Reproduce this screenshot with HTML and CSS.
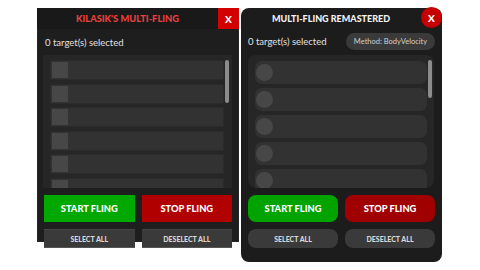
FILE: index.html
```
<!DOCTYPE html>
<html lang="en">
<head>
    <meta charset="UTF-8">
    <title>Multi-Fling</title>
    <link rel="stylesheet" href="styles.css">
</head>
<body>
<div class="desk">
    <!-- classic window -->
    <div class="panel classic">
        <div class="head">
            <div class="title">KILASIK'S MULTI-FLING</div>
            <div class="close">X</div>
        </div>
        <div class="info">
            <span>0 target(s) selected</span>
        </div>
        <div class="list">
            <div class="row"><div class="thumb"></div></div>
            <div class="row"><div class="thumb"></div></div>
            <div class="row"><div class="thumb"></div></div>
            <div class="row"><div class="thumb"></div></div>
            <div class="row"><div class="thumb"></div></div>
            <div class="row"><div class="thumb"></div></div>
            <div class="scrollbar"></div>
        </div>
        <div class="actions">
            <button class="btn start">START FLING</button>
            <button class="btn stop">STOP FLING</button>
        </div>
        <div class="actions small">
            <button class="btn sel">SELECT ALL</button>
            <button class="btn sel">DESELECT ALL</button>
        </div>
    </div>

    <!-- remastered window -->
    <div class="panel remastered">
        <div class="head">
            <div class="title">MULTI-FLING REMASTERED</div>
            <div class="close">X</div>
        </div>
        <div class="info">
            <span>0 target(s) selected</span>
            <span class="method">Method: BodyVelocity</span>
        </div>
        <div class="list">
            <div class="row"><div class="thumb"></div></div>
            <div class="row"><div class="thumb"></div></div>
            <div class="row"><div class="thumb"></div></div>
            <div class="row"><div class="thumb"></div></div>
            <div class="row"><div class="thumb"></div></div>
            <div class="scrollbar"></div>
        </div>
        <div class="actions">
            <button class="btn start">START FLING</button>
            <button class="btn stop">STOP FLING</button>
        </div>
        <div class="actions small">
            <button class="btn sel">SELECT ALL</button>
            <button class="btn sel">DESELECT ALL</button>
        </div>
    </div>
</div>
</body>
</html>
```

FILE: styles.css
```
* {
    margin: 0;
    padding: 0;
    box-sizing: border-box;
    font-family: Lato, 'Open Sans', sans-serif;
}

body {
    background: #fff;
    width: 480px;
    height: 270px;
    overflow: hidden;
}

.desk {
    display: flex;
    align-items: flex-start;
    gap: 2px;
    padding: 8px 0 0 37px;
}

.panel {
    background: #1e1e1e;
    color: #e6e6e6;
}

.head {
    display: flex;
    height: 21px;
}

.title {
    flex: 1;
    display: flex;
    align-items: center;
    justify-content: center;
    font-size: 9.3px;
    font-weight: 900;
}

.close {
    width: 21px;
    display: flex;
    align-items: center;
    justify-content: center;
    color: #fff;
    font-size: 10px;
    font-weight: 900;
}

.info {
    height: 26px;
    display: flex;
    align-items: center;
    justify-content: space-between;
    padding: 0 7px;
    font-size: 9.5px;
    color: #e0e0e0;
}

.list {
    position: relative;
    height: 133px;
    background: #262626;
    overflow: hidden;
    display: flex;
    flex-direction: column;
}

.row {
    flex-shrink: 0;
    display: flex;
    align-items: center;
    background: #323232;
    border: 1px solid #2b2b2b;
}

.scrollbar {
    position: absolute;
    width: 4px;
    background: #8c8c8c;
    border-radius: 2px;
}

.actions {
    display: flex;
    gap: 7px;
    padding: 0 7px;
    margin-top: 7px;
}

.btn {
    flex: 1;
    border: none;
    color: #fff;
    font-weight: 900;
    font-size: 9.3px;
    height: 27px;
}

.start {
    background: #00a800;
}

.stop {
    background: #b00000;
}

.small .btn {
    height: 19px;
    font-size: 7px;
    color: #d8d8d8;
    background: #3a3a3a;
}

/* classic window */
.classic {
    width: 202px;
    height: 234px;
    border: 1px solid #262626;
    border-top: none;
}

.classic .head {
    background: #191919;
    margin: 0 -1px;
}

.classic .title {
    color: #e8403f;
}

.classic .close {
    background: #d30000;
}

.classic .list {
    margin: 0 6px 0 5px;
    padding: 5px 0 0 7px;
    gap: 3.5px;
}

.classic .row {
    width: 174px;
    height: 20px;
    padding-left: 1px;
}

.classic .thumb {
    width: 16px;
    height: 16px;
    background: #474747;
}

.classic .scrollbar {
    right: 3px;
    top: 5px;
    height: 43px;
}

.classic .actions {
    padding: 0 6px;
}

.classic .small .btn {
    border-top: 1px solid #444;
    border-bottom: 1px solid #555;
}

/* remastered window */
.remastered {
    width: 201px;
    height: 254px;
    border-radius: 8px;
    background: #1c1c1c;
}

.remastered .head {
    height: 20px;
}

.remastered .title {
    color: #f2f2f2;
    font-size: 9px;
}

.remastered .close {
    height: 21px;
    margin-top: -1px;
    border-radius: 50%;
    background: #c40000;
}

.remastered .method {
    height: 17px;
    width: 89px;
    display: flex;
    align-items: center;
    justify-content: center;
    border-radius: 9px;
    background: #3a3a3a;
    font-size: 7.5px;
    color: #d0d0d0;
}

.remastered .info {
    height: 27px;
}

.remastered .list {
    margin: 0 8px 0 7px;
    padding: 6px 0 0 7px;
    border-radius: 8px;
    gap: 4px;
}

.remastered .row {
    width: 172px;
    height: 23px;
    border-radius: 7px;
    padding-left: 1px;
    border: none;
}

.remastered .thumb {
    width: 17px;
    height: 17px;
    border-radius: 50%;
    background: #474747;
}

.remastered .scrollbar {
    right: 2px;
    top: 5px;
    height: 38px;
}

.remastered .btn {
    border-radius: 8px;
}

.remastered .start {
    background: #00a300;
}

.remastered .stop {
    background: #a00000;
}
```
